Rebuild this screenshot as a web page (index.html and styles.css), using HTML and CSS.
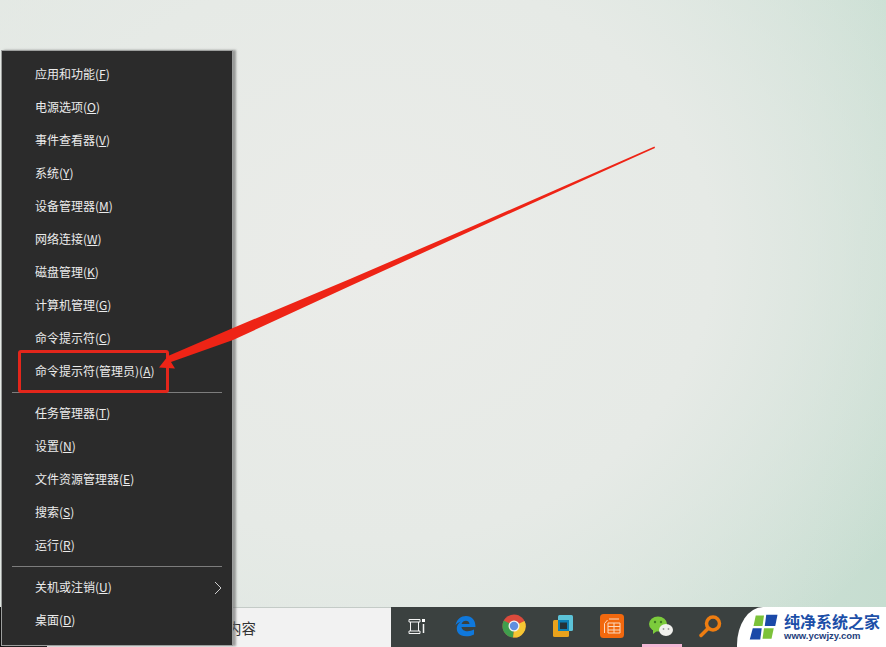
FILE: index.html
```html
<!DOCTYPE html>
<html lang="zh">
<head>
<meta charset="utf-8">
<title>Win+X</title>
<link rel="stylesheet" href="styles.css">
</head>
<body>
<div class="screen">
  <div class="desktop"></div>
  <div class="taskbar">
    <div class="start"></div>
    <div class="search"><span class="search-text">在这里输入你要搜索的内容</span></div>
    <div class="tray">
      <svg class="ico" viewBox="0 0 24 24"><path d="M5 5.500h11v2.500H5zM5 17h11v2.500H5z" fill="none" stroke="#f4f4f4" stroke-width="1"/><path d="M6.500 8v9M14.500 8v9" stroke="#f4f4f4" stroke-width="1"/><rect x="18" y="5" width="3" height="3" fill="#fff"/><path d="M19.500 10v9" stroke="#f4f4f4" stroke-width="1.500"/></svg>
      <svg class="ico" viewBox="0 0 24 24"><path d="M2.500 11C4 5 8 2 13 2c6 0 9.500 4 9.500 11H8.500c.5 4.500 7 5.500 12.500 2.500v5c-6 3-14 2.500-16.500-2.500C3 14 4 10 8 7.500c-2.500 1-4 2-5.500 3.500zM8.500 10h8c0-4.500-7-4.500-8 0z" fill="#0f78dc"/></svg>
      <svg class="ico" viewBox="0 0 24 24"><circle cx="12" cy="12" r="11.500" fill="#dc4a3c"/><path d="M12 12 22.500 7A11.500 11.500 0 0 1 11 23.500z" fill="#f5c633"/><path d="M12 12 11 23.500A11.500 11.500 0 0 1 1.800 6.500z" fill="#3f9e4d"/><circle cx="12" cy="12" r="5.500" fill="#f2f2f2"/><circle cx="12" cy="12" r="4.200" fill="#5f8fe0"/></svg>
      <svg class="ico" viewBox="0 0 24 24"><rect x="7" y="1" width="15" height="16" rx="1.500" fill="#5cc3d8"/><rect x="2" y="6" width="16" height="17" rx="1.500" fill="#e9a21c"/><rect x="7" y="6" width="11" height="11" fill="#0e7fb4"/><rect x="9" y="8.500" width="7" height="6.500" fill="#263238"/></svg>
      <svg class="ico" viewBox="0 0 24 24"><rect width="24" height="24" rx="3.500" fill="#f2680e"/><path d="M7.500 6 4.500 9.500V19M9 5h10M8 9h12v10H8zM8 12.500h12M8 16h12M14 9v10" fill="none" stroke="#fbd9be" stroke-width="1"/></svg>
      <svg class="ico" viewBox="0 0 24 24"><ellipse cx="9" cy="10" rx="9" ry="7.500" fill="#7ccb3c"/><path d="M4 15v5l4-3z" fill="#7ccb3c"/><ellipse cx="17" cy="16" rx="7" ry="6" fill="#f1f1ee"/><circle cx="6" cy="8" r="1.200" fill="#3f7a22"/><circle cx="12" cy="8" r="1.200" fill="#3f7a22"/><circle cx="14.500" cy="15" r=".9" fill="#999"/><circle cx="19.500" cy="15" r=".9" fill="#999"/></svg>
      <svg class="ico" viewBox="0 0 24 24"><circle cx="15" cy="9.500" r="6.500" fill="none" stroke="#ee7d11" stroke-width="3.500"/><path d="M9.500 15 3 21.500" stroke="#ee7d11" stroke-width="3.500" stroke-linecap="round"/></svg>
      <span class="active-mark"></span>
    </div>
  </div>

  <nav class="menu">
    <a class="item">应用和功能(<u>F</u>)</a>
    <a class="item">电源选项(<u>O</u>)</a>
    <a class="item">事件查看器(<u>V</u>)</a>
    <a class="item">系统(<u>Y</u>)</a>
    <a class="item">设备管理器(<u>M</u>)</a>
    <a class="item">网络连接(<u>W</u>)</a>
    <a class="item">磁盘管理(<u>K</u>)</a>
    <a class="item">计算机管理(<u>G</u>)</a>
    <a class="item">命令提示符(<u>C</u>)</a>
    <a class="item">命令提示符(管理员)(<u>A</u>)</a>
    <div class="sep"></div>
    <a class="item">任务管理器(<u>T</u>)</a>
    <a class="item">设置(<u>N</u>)</a>
    <a class="item">文件资源管理器(<u>E</u>)</a>
    <a class="item">搜索(<u>S</u>)</a>
    <a class="item">运行(<u>R</u>)</a>
    <div class="sep"></div>
    <a class="item more">关机或注销(<u>U</u>)
      <svg class="chev" viewBox="0 0 8 14"><path d="M1 1l6 6-6 6" fill="none" stroke="#cfcfcf" stroke-width="1"/></svg>
    </a>
    <a class="item">桌面(<u>D</u>)</a>
  </nav>

  <div class="redbox"></div>
  <svg class="arrow" viewBox="0 0 886 647"><polygon points="654.500,146.500 473,226 350,279 233,328 168,356 159,367.500 175,368.500 171,362 233,340 350,286 473,230 655,148" fill="#ee2416"/></svg>

  <div class="logo">
    <svg class="logo-mark" viewBox="0 0 40 36"><path d="M9 2h11l-2 14H6z" fill="#7cc23a"/><path d="M23 1h15l-3 15H21z" fill="#1b49a8"/><path d="M5 19h12l-2 15H1z" fill="#1b49a8"/><path d="M20 19h13l-3 14H18z" fill="#7cc23a"/></svg>
    <div class="logo-text">
      <div class="logo-title">纯净系统之家</div>
      <div class="logo-url">www.ycwjzy.com</div>
    </div>
  </div>
</div>
</body>
</html>
```
FILE: styles.css
```css
* { box-sizing: border-box; }
html, body { margin: 0; padding: 0; }
body { width: 886px; height: 647px; overflow: hidden; font-family: "Noto Sans CJK SC", "Open Sans", sans-serif; }
.screen { position: relative; width: 886px; height: 647px; display: flex; flex-direction: column; overflow: hidden; }
.desktop { flex: 1; background:
  radial-gradient(ellipse 620px 520px at 42% 42%, #ebece9 0%, #e6eae6 55%, rgba(224,232,226,0) 100%),
  linear-gradient(100deg, #e2e8e3 0%, #dae6df 55%, #c6ddd0 100%); }
.taskbar { height: 40px; display: flex; background: #3b4140; }
.start { width: 47px; background: #111; }
.search { width: 344px; background: #f2f2f2; border-top: 1px solid #c4cbc7; display: flex; align-items: center; padding-left: 35px; }
.search-text { font-size: 14.500px; color: #333; white-space: nowrap; }
.tray { position: relative; flex: 1; display: flex; align-items: center; gap: 25px; padding: 0 0 2px 13px; }
.ico { width: 24px; height: 24px; flex: none; }
.active-mark { position: absolute; left: 251px; bottom: 0; width: 40px; height: 3px; background: #f2b6d4; }
.menu { position: absolute; left: 1px; top: 50px; width: 232px; height: 596px; background: #2b2b2b; border: 1px solid #9d9f9e; padding: 7px 0; box-shadow: 3px 0 2px rgba(100,100,100,.6); color: #ececec; font-size: 12px; }
.item { display: flex; align-items: center; height: 33px; padding: 0 0 2px 33px; white-space: nowrap; }
.item u { text-underline-offset: 1px; }
.more { position: relative; }
.chev { position: absolute; right: 10px; top: 10px; width: 8px; height: 14px; }
.sep { height: 9px; margin: 0 10px; position: relative; }
.sep::before { content: ""; position: absolute; left: 0; right: 0; top: 4px; height: 1px; background: #7d7d7d; }
.redbox { position: absolute; left: 18px; top: 350px; width: 151px; height: 43px; border: 3px solid #e3261b; border-radius: 3px; }
.arrow { position: absolute; left: 0; top: 0; width: 886px; height: 647px; pointer-events: none; }
.logo { position: absolute; left: 737px; top: 607px; width: 149px; height: 40px; background: #fff; border-radius: 26px 0 0 0 / 38px 0 0 0; display: flex; align-items: center; gap: 5px; padding-left: 12px; }
.logo-mark { width: 30px; height: 27px; flex: none; }
.logo-text { display: flex; flex-direction: column; color: #1c4fa8; }
.logo-title { font-size: 16px; line-height: 17px; font-weight: 700; white-space: nowrap; }
.logo-url { font-family: "Liberation Sans", sans-serif; font-size: 9.500px; line-height: 11px; font-weight: 700; color: #24407c; white-space: nowrap; }
```
